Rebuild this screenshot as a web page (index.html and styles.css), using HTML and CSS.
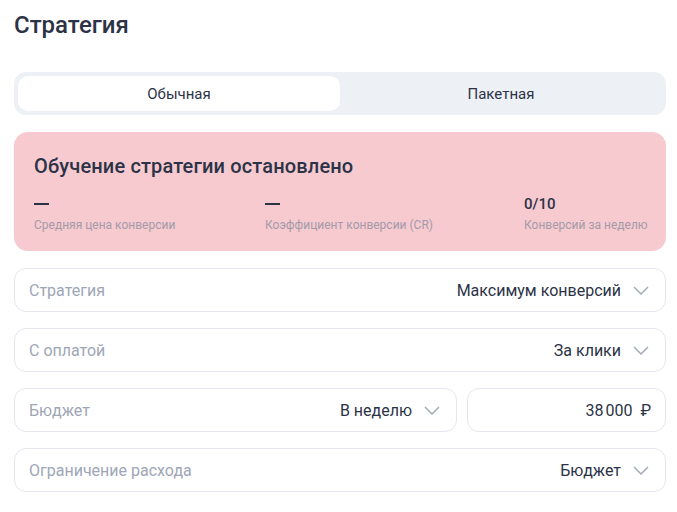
FILE: index.html
```html
<!DOCTYPE html>
<html lang="ru">

<head>
    <meta charset="UTF-8">
    <meta name="viewport" content="width=device-width, initial-scale=1.0">
    <title>Стратегия</title>
    <link rel="stylesheet" href="styles.css">
</head>

<body>
    <div class="page">
        <h1 class="title">Стратегия</h1>

        <div class="tabs">
            <button class="tab active">Обычная</button>
            <button class="tab">Пакетная</button>
        </div>

        <div class="alert">
            <h2>Обучение стратегии остановлено</h2>
            <div class="stats">
                <div class="stat">
                    <div class="stat-value"><span class="dash"></span></div>
                    <div class="stat-label">Средняя цена конверсии</div>
                </div>
                <div class="stat">
                    <div class="stat-value"><span class="dash"></span></div>
                    <div class="stat-label">Коэффициент конверсии (CR)</div>
                </div>
                <div class="stat">
                    <div class="stat-value">0/10</div>
                    <div class="stat-label">Конверсий за неделю</div>
                </div>
            </div>
        </div>

        <div class="field">
            <span class="label">Стратегия</span>
            <span class="value">Максимум конверсий</span>
            <svg class="chevron" viewBox="0 0 16 9"><path d="M1 1l7 7 7-7" /></svg>
        </div>

        <div class="field">
            <span class="label">С оплатой</span>
            <span class="value">За клики</span>
            <svg class="chevron" viewBox="0 0 16 9"><path d="M1 1l7 7 7-7" /></svg>
        </div>

        <div class="row">
            <div class="field">
                <span class="label">Бюджет</span>
                <span class="value">В неделю</span>
                <svg class="chevron" viewBox="0 0 16 9"><path d="M1 1l7 7 7-7" /></svg>
            </div>
            <div class="field amount">
                <span class="value">38&#8239;000&nbsp; ₽</span>
            </div>
        </div>

        <div class="field">
            <span class="label">Ограничение расхода</span>
            <span class="value">Бюджет</span>
            <svg class="chevron" viewBox="0 0 16 9"><path d="M1 1l7 7 7-7" /></svg>
        </div>
    </div>
</body>

</html>
```

FILE: styles.css
```css
* {
    margin: 0;
    padding: 0;
    box-sizing: border-box;
}

body {
    font-family: Roboto, "Noto Sans", sans-serif;
    color: #2c3347;
    background-color: #fff;
}

.page {
    padding: 9px 11px 0 14px;
    display: flex;
    flex-direction: column;
}

.title {
    font-size: 24px;
    font-weight: 500;
    line-height: 32px;
    margin-bottom: 31px;
}

/* tabs */
.tabs {
    display: flex;
    height: 43px;
    padding: 4px;
    background-color: #edf0f5;
    border-radius: 12px;
    margin-bottom: 17px;
}

.tab {
    flex: 1;
    border: 0;
    background: transparent;
    font-family: inherit;
    font-size: 15px;
    color: #2c3347;
    border-radius: 10px;
}

.tab.active {
    background-color: #fff;
}

/* alert card */
.alert {
    height: 119px;
    background-color: #f6cacf;
    border-radius: 14px;
    padding: 21px 20px 0 20px;
    margin-bottom: 17px;
}

.alert h2 {
    font-size: 20px;
    font-weight: 500;
    line-height: 26px;
    letter-spacing: 0.15px;
    margin-bottom: 15px;
}

.stats {
    display: grid;
    grid-template-columns: 231px 259px 1fr;
}

.stat-value {
    font-size: 15px;
    font-weight: 500;
    line-height: 20px;
    height: 20px;
    display: flex;
    align-items: center;
}

.dash {
    width: 15px;
    height: 2px;
    background-color: #2c3347;
}

.stat-label {
    font-size: 12px;
    line-height: 16px;
    margin-top: 3px;
    color: #a49aa8;
    white-space: nowrap;
}

/* fields */
.field {
    display: flex;
    align-items: center;
    height: 44px;
    padding: 0 16px 0 14px;
    border: 1px solid #e4e8ee;
    border-radius: 12px;
    margin-bottom: 16px;
    font-size: 16px;
}

.label {
    flex: 1;
    color: #9ea6b6;
}

.value {
    color: #2c3347;
}

.chevron {
    width: 16px;
    height: 9px;
    margin-left: 12px;
    fill: none;
    stroke: #a3abba;
    stroke-width: 1.5;
}

.row {
    display: flex;
    gap: 10px;
}

.row .field {
    flex: 1;
}

.row .amount {
    flex: 0 0 199px;
    justify-content: flex-end;
    padding-right: 14px;
}
```
